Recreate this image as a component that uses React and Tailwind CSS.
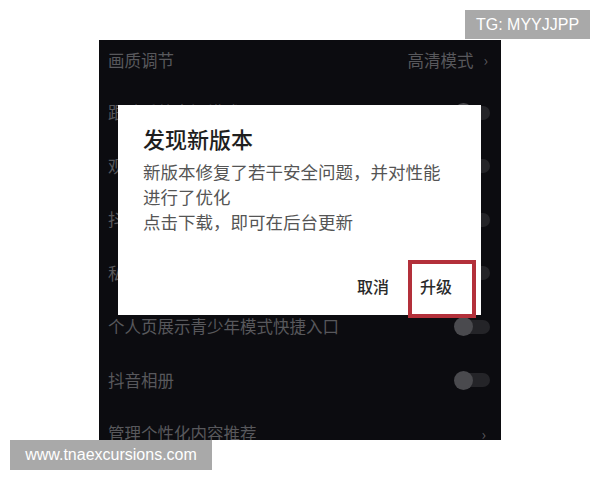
import React from 'react';

const rows = [
  { label: '跟随系统夜间模式', toggle: 'off' },
  { label: '观看历史记录', toggle: 'on' },
  { label: '抖音号搜索', toggle: 'off' },
  { label: '私密账号', toggle: 'off' },
  { label: '个人页展示青少年模式快捷入口', toggle: 'off' },
  { label: '抖音相册', toggle: 'off' },
  { label: '管理个性化内容推荐', toggle: 'arrow' },
];

const Toggle = ({ on }) => (
  <div className="relative w-[36px] h-[18px] flex items-center">
    <div className="absolute left-[6px] right-0 h-[14px] rounded-full bg-[#242428]" />
    <div className={`relative w-[19px] h-[19px] rounded-full ${on ? 'bg-[#3c5a4d]' : 'bg-[#4a4a4e]'}`} />
  </div>
);

export default function App() {
  return (
    <div
      className="relative w-[600px] h-[480px] bg-white overflow-hidden"
      style={{ fontFamily: '"Noto Sans CJK SC", "Noto Sans", sans-serif' }}
    >
      <div className="pt-[40px] pl-[99px]">
        {/* phone screen */}
        <div className="relative w-[402px] h-[400px] bg-[#0c0c10] overflow-hidden">
          <div className="flex flex-col px-[9px]">
            <div className="h-[46px] pb-[6px] flex items-center justify-between text-[16.5px] text-[#58585c]">
              <span>画质调节</span>
              <span className="flex items-center gap-[10px] pr-[4px]">
                高清模式
                <span className="text-[15px]">›</span>
              </span>
            </div>
            {rows.map((r) => (
              <div key={r.label} className="h-[53.5px] flex items-center justify-between text-[16.5px] text-[#58585c]">
                <span>{r.label}</span>
                {r.toggle === 'arrow' ? (
                  <span className="text-[15px] pr-[6px]">›</span>
                ) : (
                  <div className="pr-[2px]">
                    <Toggle on={r.toggle === 'on'} />
                  </div>
                )}
              </div>
            ))}
          </div>

          {/* update dialog */}
          <div className="absolute left-[19px] top-[65px] w-[363px] h-[210px] bg-white flex flex-col px-[25px] pt-[18px]">
            <div className="text-[22px] leading-[30px] font-medium text-[#1e1e1e]">发现新版本</div>
            <div className="mt-[6px] text-[17.5px] leading-[25px] text-[#555555]">
              <div>新版本修复了若干安全问题，并对性能</div>
              <div>进行了优化</div>
              <div>点击下载，即可在后台更新</div>
            </div>
            <div className="mt-auto mb-[18px] flex justify-end gap-[31px] pr-[4px] text-[16px] leading-[22px] font-medium text-[#2a2a2a]">
              <span>取消</span>
              <span>升级</span>
            </div>
          </div>

          {/* highlight annotation */}
          <div className="absolute left-[309px] top-[220px] w-[68px] h-[58px] border-[4px] border-[#b3303a]" />
        </div>
      </div>

      {/* watermarks */}
      <div
        className="absolute left-[465px] top-[10px] w-[125px] h-[29px] bg-[#a9a9a9] text-white text-[16px] flex items-center justify-center"
        style={{ fontFamily: '"Liberation Sans", Arial, sans-serif' }}
      >
        TG: MYYJJPP
      </div>
      <div
        className="absolute left-[10px] top-[440px] w-[202px] h-[30px] bg-[#a9a9a9] text-white text-[16px] flex items-center justify-center"
        style={{ fontFamily: '"Liberation Sans", Arial, sans-serif' }}
      >
        www.tnaexcursions.com
      </div>
    </div>
  );
}
